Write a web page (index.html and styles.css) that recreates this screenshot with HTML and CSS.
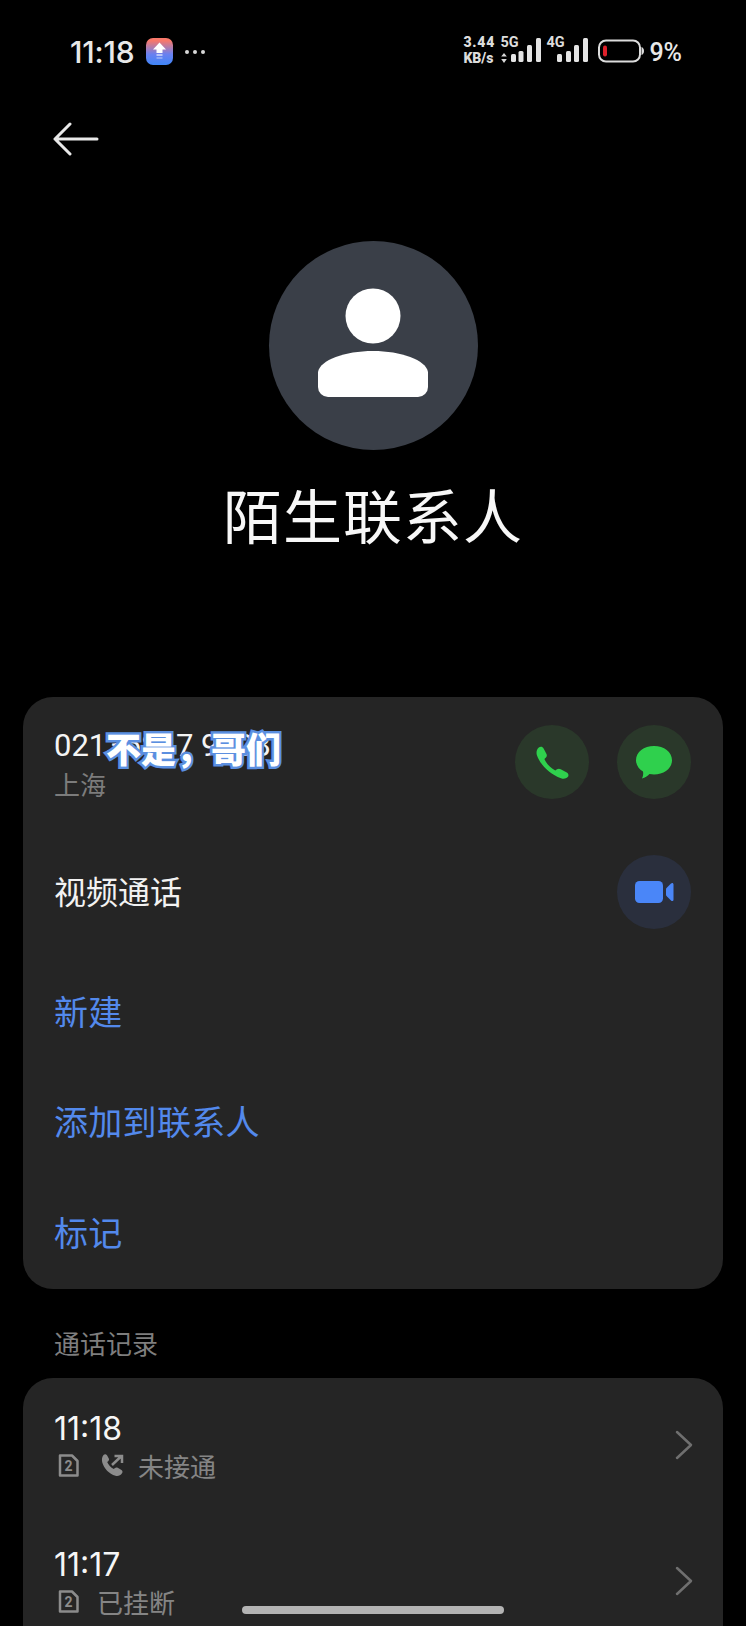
FILE: index.html
```html
<!DOCTYPE html>
<html lang="zh-CN">
<head>
<meta charset="utf-8">
<title>陌生联系人</title>
<link rel="stylesheet" href="styles.css">
</head>
<body>
<div class="screen">
  <header class="status">
    <div class="status-left">
      <span class="clock">11:18</span>
      <svg class="app-icon" width="27" height="27" viewBox="0 0 27 27">
        <defs><linearGradient id="appg" x1="0" y1="0" x2="0" y2="1"><stop offset="0.1" stop-color="#f8786a"/><stop offset="0.6" stop-color="#6a80f0"/><stop offset="1" stop-color="#3f86f8"/></linearGradient></defs>
        <rect width="27" height="27" rx="7" fill="url(#appg)"/>
        <path d="M13.500 4.500 20 11.500H16.500V15H10.500V11.500H7Z" fill="#fff"/>
        <rect x="10.500" y="16" width="6" height="2" fill="#fff" opacity=".55"/>
        <rect x="10.500" y="19" width="6" height="2" fill="#fff" opacity=".3"/>
      </svg>
      <span class="more"><i></i><i></i><i></i></span>
    </div>
    <div class="status-right">
      <span class="speed"><b>3.44</b><b>KB/s</b></span>
      <span class="net">
        <b class="net-label">5G</b>
        <svg width="41" height="36" viewBox="0 0 41 36"><path d="M4 21 1.200 24.500H6.800ZM4 31 1.200 27H6.800Z" fill="#d8d8d8"/><g fill="#e4e4e4"><rect x="11" y="22" width="5" height="8" rx="1.500"/><rect x="18.500" y="19" width="5" height="11" rx="1.500"/><rect x="27" y="13" width="5" height="17" rx="1.500"/><rect x="36" y="6" width="5" height="24" rx="1.500"/></g></svg>
      </span>
      <span class="net net-4g">
        <b class="net-label">4G</b>
        <svg width="31" height="36" viewBox="0 0 31 36"><g fill="#e4e4e4"><rect x="0" y="22" width="5" height="8" rx="1.500"/><rect x="9" y="19" width="5" height="11" rx="1.500"/><rect x="17" y="13" width="5" height="17" rx="1.500"/><rect x="26" y="6" width="5" height="24" rx="1.500"/></g></svg>
      </span>
      <svg class="battery" width="46" height="25" viewBox="0 0 46 25"><rect x="1" y="1.500" width="41" height="21" rx="7" fill="none" stroke="#dcdcdc" stroke-width="2"/><rect x="5" y="6.500" width="4" height="11" rx="2" fill="#e0202a"/><path d="M43.500 8c1.500.5 2.500 2 2.500 4s-1 3.500-2.500 4Z" fill="#dcdcdc"/></svg>
      <span class="pct">9%</span>
    </div>
  </header>

  <nav class="nav">
    <svg width="46" height="34" viewBox="0 0 46 34" fill="none" stroke="#e8e8e8" stroke-width="3" stroke-linecap="round" stroke-linejoin="round"><path d="M44 17H2M17 2 2 17 17 32"/></svg>
  </nav>

  <section class="hero">
    <div class="avatar">
      <svg width="112" height="110" viewBox="0 0 112 110"><circle cx="56" cy="28" r="27.500" fill="#fff"/><path d="M1 84C3 72 28 63 56 63S109 72 111 84V99A10 10 0 0 1 101 109H11A10 10 0 0 1 1 99Z" fill="#fff"/></svg>
    </div>
    <h1 class="name">陌生联系人</h1>
  </section>

  <section class="card">
    <div class="row row-main">
      <div class="stack stack-main">
        <span class="number">02136817 9008</span>
        <span class="sub">上海</span>
      </div>
      <div class="actions">
        <span class="round round-green">
          <svg width="33" height="33" viewBox="0 0 33 33"><path d="M2.500 1.800C4.200 .2 6.500.4 7.600 2.400L10.500 8C11.200 9.500 10.800 10.800 9.700 11.800L8.400 13C10.200 17.500 14.500 22 19.300 24.500L21 23.300C22.200 22.500 23.500 22.500 24.700 23.200L30.800 26.600C32.600 27.700 33 29.800 31.700 31.100 30 32.800 27.600 33.300 25 32.300 13.500 28 4.500 19 1 9.500 0 6.500.6 3.700 2.500 1.800Z" fill="#2fd04d"/></svg>
        </span>
        <span class="round round-green">
          <svg width="36" height="33" viewBox="0 0 36 33"><path d="M18 0C28 0 36 6 36 14.200S28 28.500 18 28.500C16.500 28.500 15 28.300 13.500 28C11.500 30 9 31.500 6 32.500 7 30.500 7.500 28 7 25.500 2.800 23 0 19 0 14.200 0 6 8 0 18 0Z" fill="#2fd04d"/></svg>
        </span>
      </div>
    </div>
    <div class="row row-main">
      <span class="label">视频通话</span>
      <span class="round round-blue">
        <svg width="39" height="22" viewBox="0 0 39 22"><rect width="28" height="22" rx="4.500" fill="#4a86f8"/><path d="M31 8.500C31 7.500 31.500 7 32 6.500L36 2.500C37 1.500 38.500 1.800 38.500 3.500V18.500C38.500 20.200 37 20.500 36 19.500L32 15.500C31.500 15 31 14.500 31 13.500Z" fill="#4a86f8"/></svg>
      </span>
    </div>
    <div class="row row-link"><span class="link">新建</span></div>
    <div class="row row-link"><span class="link">添加到联系人</span></div>
    <div class="row row-link row-last"><span class="link">标记</span></div>
    <div class="caption">不是，哥们</div>
  </section>

  <h2 class="section-title">通话记录</h2>

  <section class="card card-log">
    <div class="row row-log">
      <div class="stack">
        <span class="time">11:18</span>
        <span class="meta">
          <svg class="sim" width="21" height="23" viewBox="0 0 21 23" fill="none"><path d="M2 1.500H14L19.500 7V21.500H2Z" stroke="#8c8c8c" stroke-width="2.500" stroke-linejoin="round"/><text x="10.500" y="17" text-anchor="middle" class="sim-num">2</text></svg>
          <svg class="call" width="23" height="23" viewBox="0 0 23 23"><path d="M2.500 1C3.500 0 5 0 6 1.200L7.800 4.500C8.300 5.500 8 6.500 7.200 7.200L6.200 8C7.300 10.800 9.800 13.500 12.800 15L14 14C14.800 13.300 15.800 13.300 16.700 13.800L20.500 16C21.700 16.800 21.800 18.300 21 19.300 19.500 21.500 17 22.500 14.500 21.800 8 19.800 3 14.500 1.200 8.200.6 5.500 1 3 2.500 1Z" fill="#8c8c8c"/><path d="M11 11 20 2.500M13.500 2H21V9" fill="none" stroke="#8c8c8c" stroke-width="2.500"/></svg>
          <span>未接通</span>
        </span>
      </div>
      <svg class="chev" width="18" height="30" viewBox="0 0 18 30" fill="none" stroke="#6f6f6f" stroke-width="2.500" stroke-linecap="round" stroke-linejoin="round"><path d="M2 2 16 15 2 28"/></svg>
    </div>
    <div class="row row-log">
      <div class="stack">
        <span class="time">11:17</span>
        <span class="meta">
          <svg class="sim" width="21" height="23" viewBox="0 0 21 23" fill="none"><path d="M2 1.500H14L19.500 7V21.500H2Z" stroke="#8c8c8c" stroke-width="2.500" stroke-linejoin="round"/><text x="10.500" y="17" text-anchor="middle" class="sim-num">2</text></svg>
          <span class="meta-wide">已挂断</span>
        </span>
      </div>
      <svg class="chev" width="18" height="30" viewBox="0 0 18 30" fill="none" stroke="#6f6f6f" stroke-width="2.500" stroke-linecap="round" stroke-linejoin="round"><path d="M2 2 16 15 2 28"/></svg>
    </div>
  </section>
  <div class="home-bar"></div>
</div>
</body>
</html>
```

FILE: styles.css
```css
* { box-sizing: border-box; }
html, body { margin: 0; padding: 0; background: #000; }
body { font-family: "Noto Sans CJK SC", Roboto, sans-serif; color: #f2f2f2; }
.screen { position: relative; width: 746px; height: 1626px; overflow: hidden; background: #000; }

.status { height: 100px; padding: 0 64px 0 70px; display: flex; justify-content: space-between; align-items: center; }
.status-left { display: flex; align-items: center; }
.clock { font: 500 30px/1 Inter, Roboto, sans-serif; letter-spacing: -.2px; width: 63px; margin-top: 4px; white-space: nowrap; color: #e8e8e8; }
.app-icon { margin-left: 13px; margin-top: 2px; }
.more { display: flex; gap: 4px; margin-left: 12px; margin-top: 4px; }
.more i { width: 4px; height: 4px; border-radius: 50%; background: #d8d8d8; }
.status-right { display: flex; align-items: center; }
.speed { display: flex; flex-direction: column; font: 700 14px/16px Roboto, sans-serif; color: #dcdcdc; width: 36px; }
.speed b:first-child { letter-spacing: .8px; }
.net { position: relative; display: block; width: 41px; height: 36px; margin-left: 1px; }
.net-4g { width: 31px; margin-left: 16px; }
.net svg { display: block; }
.net-label { position: absolute; left: 0; top: 4px; font: 700 14.5px/14px Roboto, sans-serif; color: #dcdcdc; }
.net-4g .net-label { left: -11px; top: 4px; }
.battery { margin-left: 10px; margin-top: 2px; }
.pct { margin-left: 5px; margin-top: 4px; font: 500 25px/1 Roboto, sans-serif; color: #e8e8e8; }

.nav { height: 80px; padding: 22px 0 0 53px; }
.nav svg { display: block; }

.hero { height: 517px; padding-top: 61px; display: flex; flex-direction: column; align-items: center; }
.avatar { width: 209px; height: 209px; border-radius: 50%; background: #3a3f48; display: flex; align-items: center; justify-content: center; }
.avatar svg { display: block; margin-top: -6px; }
.name { margin: 24px 0 0; font-size: 59px; line-height: 80px; font-weight: 400; letter-spacing: 1px; color: #f7f7f7; }

.card { position: relative; margin: 0 23px; background: #252525; border-radius: 30px; padding: 0 32px 0 31px; }
.row { display: flex; align-items: center; justify-content: space-between; }
.row-main { height: 130px; }
.row-link { height: 110px; }
.row-last { height: 112px; }
.stack { display: flex; flex-direction: column; }
.stack-main { padding-top: 6px; }
.number { font: 400 31px/36px Roboto, sans-serif; color: #f4f4f4; }
.sub { font-size: 26px; line-height: 36px; margin-top: 2px; font-weight: 400; color: #7c7c7c; }
.actions { display: flex; gap: 28px; }
.round { width: 74px; height: 74px; border-radius: 50%; display: flex; align-items: center; justify-content: center; }
.round-green { background: #2a382a; }
.round-blue { background: #2a2f3d; }
.label { font-size: 32px; font-weight: 400; color: #f2f2f2; margin-bottom: 4px; }
.link { font-size: 34px; letter-spacing: .3px; font-weight: 400; color: #5389ec; margin-bottom: 3px; }
.caption { position: absolute; left: 83px; top: 28px; font-size: 35px; line-height: 46px; font-weight: 900; color: #fff; -webkit-text-stroke: 5px #5b8fe0; paint-order: stroke fill; white-space: nowrap; }

.section-title { margin: 0; height: 89px; padding: 34px 0 0 54px; font-size: 26px; line-height: 40px; font-weight: 400; color: #7e7e7e; }

.row-log { height: 136px; }
.time { font: 400 32px/38px Inter, Roboto, sans-serif; color: #f6f6f6; letter-spacing: 0; padding-top: 1px; }
.meta { display: flex; align-items: center; height: 36px; font-size: 26px; font-weight: 400; color: #858585; }
.sim { margin-left: 4px; }
.call { margin-left: 22px; }
.meta span { margin-left: 14px; }
.meta .meta-wide { margin-left: 18px; }
.sim-num { font: 700 14px Roboto, sans-serif; fill: #8c8c8c; }
.chev { margin-right: -2px; margin-bottom: 2px; }
.card-log { height: 300px; }
.home-bar { position: absolute; left: 242px; top: 1606px; width: 262px; height: 8px; border-radius: 4px; background: #b4b4b4; }
```
